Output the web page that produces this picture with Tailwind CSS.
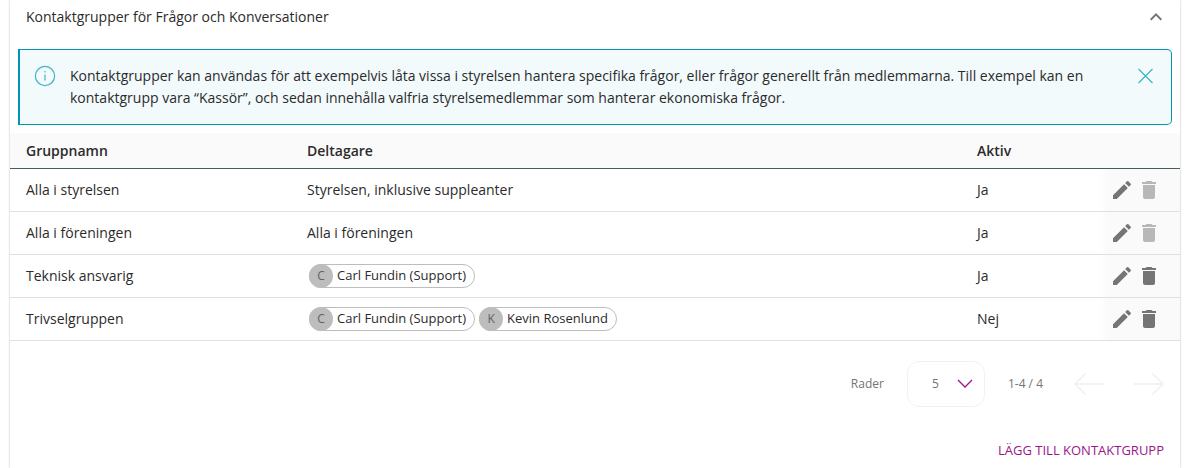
<!DOCTYPE html>
<html lang="sv">
<head>
    <meta charset="utf-8">
    <meta name="viewport" content="width=device-width, initial-scale=1">
    <title>Kontaktgrupper</title>
    <script src="https://cdn.jsdelivr.net/npm/@tailwindcss/browser@4"></script>
</head>
<body class="min-h-screen flex bg-white font-['Open_Sans',sans-serif] text-sm text-[#2b2b2b] overflow-x-hidden">
    <svg class="hidden">
        <symbol id="edit" viewBox="0 0 24 24"><path d="M3 17.25V21h3.75L17.81 9.94l-3.75-3.75L3 17.25zM20.71 7.04c.39-.39.39-1.02 0-1.41l-2.34-2.34a.996.996 0 0 0-1.41 0l-1.83 1.83 3.75 3.75 1.83-1.83z"/></symbol>
        <symbol id="trash" viewBox="0 0 24 24"><path d="M6 19c0 1.1.9 2 2 2h8c1.1 0 2-.9 2-2V7H6v12zM19 4h-3.5l-1-1h-5l-1 1H5v2h14V4z"/></symbol>
    </svg>

    <section class="flex-1 min-w-0 ml-[10px] mr-[13px] shadow-[0_0_2px_rgba(0,0,0,0.28)]">
        <header class="flex items-center justify-between h-[33px] pl-4 pr-3">
            <h2>Kontaktgrupper för Frågor och Konversationer</h2>
            <button type="button" aria-label="Fäll ihop">
                <svg class="size-6 fill-[#757575]" viewBox="0 0 24 24"><path d="M12 8l-6 6 1.41 1.41L12 10.83l4.59 4.58L18 14z"/></svg>
            </button>
        </header>

        <div class="flex mt-4 mx-2 py-[15px] pl-[14px] pr-[15px] border border-l-2 border-[#0097b2] rounded-r-[5px] bg-[#f2fafc]">
            <svg class="size-[22px] shrink-0 mr-[14px]" viewBox="0 0 22 22" fill="none" stroke="#3fb3c8" stroke-width="1.2">
                <circle cx="11" cy="11" r="9.6"/>
                <path d="M11 9.5v6M11 6v1.6"/>
            </svg>
            <p class="flex-1 leading-[22px]">Kontaktgrupper kan användas för att exempelvis låta vissa i styrelsen hantera specifika frågor, eller frågor generellt från medlemmarna. Till exempel kan en kontaktgrupp vara “Kassör”, och sedan innehålla valfria styrelsemedlemmar som hanterar ekonomiska frågor.</p>
            <button type="button" aria-label="Stäng" class="self-start ml-10">
                <svg class="size-[20px] my-px" viewBox="0 0 20 20" fill="none" stroke="#3fb3c8" stroke-width="1.2"><path d="M2.5 3l14 14M16.500 3l-14 14"/></svg>
            </button>
        </div>

        <table class="w-full mt-2 table-fixed text-left">
            <thead>
                <tr class="h-[35px] bg-[#fafafa] border-b border-[#455a64]">
                    <th class="w-[281px] pt-0.5 pl-4 font-semibold">Gruppnamn</th>
                    <th class="pt-0.5 pl-4 font-semibold">Deltagare</th>
                    <th class="w-[139px] pt-0.5 pl-4 font-semibold">Aktiv</th>
                    <th class="w-[80px]"></th>
                </tr>
            </thead>
            <tbody>
                <tr class="h-[43px] border-b border-[#e0e0e0]">
                    <td class="pl-4">Alla i styrelsen</td>
                    <td class="pl-4">Styrelsen, inklusive suppleanter</td>
                    <td class="pl-4">Ja</td>
                    <td class="bg-linear-to-r from-white to-[#fafafa] to-[8px]">
                        <div class="flex gap-[3px] justify-end pr-[19px]">
                            <button type="button" aria-label="Redigera"><svg class="size-6 fill-[#757575]"><use href="#edit"/></svg></button>
                            <button type="button" aria-label="Ta bort" disabled><svg class="size-6 fill-[#b8b8b8]"><use href="#trash"/></svg></button>
                        </div>
                    </td>
                </tr>
                <tr class="h-[43px] border-b border-[#e0e0e0]">
                    <td class="pl-4">Alla i föreningen</td>
                    <td class="pl-4">Alla i föreningen</td>
                    <td class="pl-4">Ja</td>
                    <td class="bg-linear-to-r from-white to-[#fafafa] to-[8px]">
                        <div class="flex gap-[3px] justify-end pr-[19px]">
                            <button type="button" aria-label="Redigera"><svg class="size-6 fill-[#757575]"><use href="#edit"/></svg></button>
                            <button type="button" aria-label="Ta bort" disabled><svg class="size-6 fill-[#b8b8b8]"><use href="#trash"/></svg></button>
                        </div>
                    </td>
                </tr>
                <tr class="h-[43px] border-b border-[#e0e0e0]">
                    <td class="pl-4">Teknisk ansvarig</td>
                    <td class="pl-[18px]">
                        <div class="flex gap-1 text-[13px]">
                            <span class="flex items-center h-6 pr-2 border border-[#bdbdbd] rounded-full"><span class="flex items-center justify-center size-6 -ml-px mr-1 rounded-full bg-[#bdbdbd] text-xs text-[#616161]">C</span>Carl Fundin (Support)</span>
                        </div>
                    </td>
                    <td class="pl-4">Ja</td>
                    <td class="bg-linear-to-r from-white to-[#fafafa] to-[8px]">
                        <div class="flex gap-[3px] justify-end pr-[19px]">
                            <button type="button" aria-label="Redigera"><svg class="size-6 fill-[#757575]"><use href="#edit"/></svg></button>
                            <button type="button" aria-label="Ta bort"><svg class="size-6 fill-[#757575]"><use href="#trash"/></svg></button>
                        </div>
                    </td>
                </tr>
                <tr class="h-[43px] border-b border-[#e0e0e0]">
                    <td class="pl-4">Trivselgruppen</td>
                    <td class="pl-[18px]">
                        <div class="flex gap-1 text-[13px]">
                            <span class="flex items-center h-6 pr-2 border border-[#bdbdbd] rounded-full"><span class="flex items-center justify-center size-6 -ml-px mr-1 rounded-full bg-[#bdbdbd] text-xs text-[#616161]">C</span>Carl Fundin (Support)</span>
                            <span class="flex items-center h-6 pr-2 border border-[#bdbdbd] rounded-full"><span class="flex items-center justify-center size-6 -ml-px mr-1 rounded-full bg-[#bdbdbd] text-xs text-[#616161]">K</span>Kevin Rosenlund</span>
                        </div>
                    </td>
                    <td class="pl-4">Nej</td>
                    <td class="bg-linear-to-r from-white to-[#fafafa] to-[8px]">
                        <div class="flex gap-[3px] justify-end pr-[19px]">
                            <button type="button" aria-label="Redigera"><svg class="size-6 fill-[#757575]"><use href="#edit"/></svg></button>
                            <button type="button" aria-label="Ta bort"><svg class="size-6 fill-[#757575]"><use href="#trash"/></svg></button>
                        </div>
                    </td>
                </tr>
            </tbody>
        </table>

        <div class="flex items-center justify-end mt-5 pr-4 text-xs text-[#757575]">
            <label for="rows" class="mr-[23px]">Rader</label>
            <div class="grid items-center">
                <select id="rows" class="col-start-1 row-start-1 appearance-none w-[78px] h-[46px] pl-6 border border-[#f2f2f2] rounded-xl">
                    <option>5</option>
                    <option>10</option>
                    <option>25</option>
                </select>
                <svg class="col-start-1 row-start-1 justify-self-end mr-3 w-4 h-[10px] pointer-events-none" viewBox="0 0 16 10" fill="none" stroke="#9b1487" stroke-width="1.3"><path d="M1 1l7 7 7-7"/></svg>
            </div>
            <span class="ml-[23px]">1-4 / 4</span>
            <div class="flex gap-[30px] ml-[31px]">
                <button type="button" aria-label="Föregående sida" disabled>
                    <svg class="w-[30px] h-[22px]" viewBox="0 0 30 22" fill="none" stroke="#f0f0f0" stroke-width="1.5"><path d="M30 11H1M12 0L1 11l11 11"/></svg>
                </button>
                <button type="button" aria-label="Nästa sida" disabled>
                    <svg class="w-[30px] h-[22px]" viewBox="0 0 30 22" fill="none" stroke="#f0f0f0" stroke-width="1.5"><path d="M0 11h29M18 0l11 11-11 11"/></svg>
                </button>
            </div>
        </div>

        <div class="flex justify-end mt-8 pr-4">
            <button type="button" class="text-[13px] leading-[22px] uppercase text-[#9b1487]">Lägg till kontaktgrupp</button>
        </div>
    </section>
</body>
</html>
